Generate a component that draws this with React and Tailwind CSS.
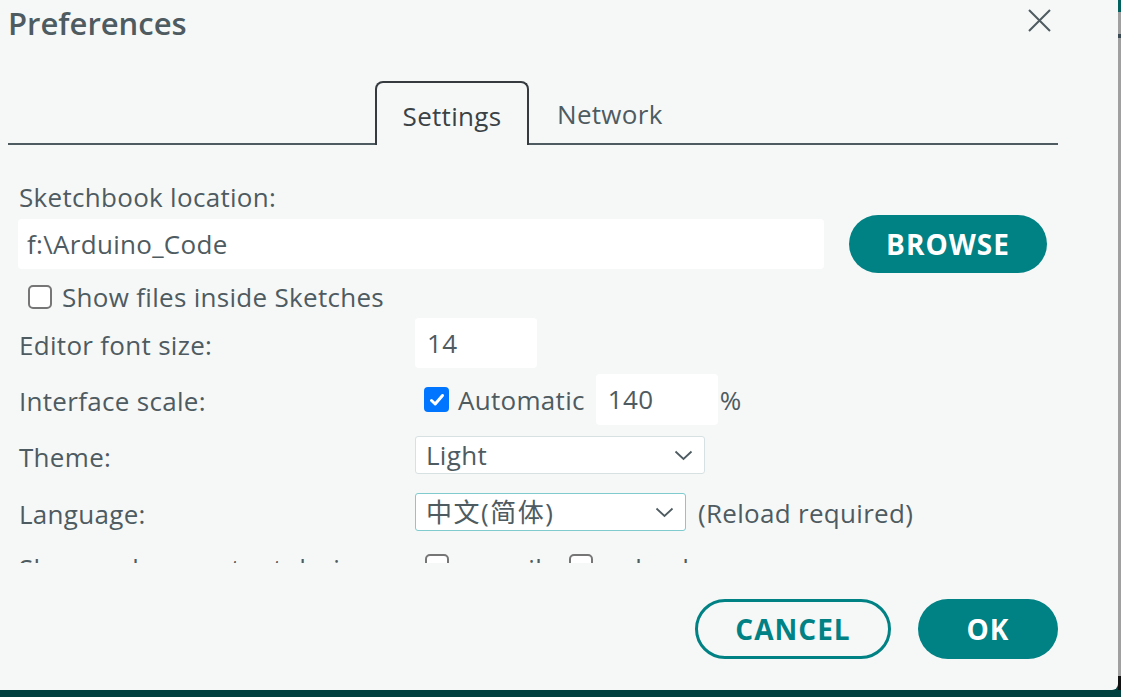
import React from 'react';

const font = { fontFamily: '"Open Sans", "Noto Sans CJK SC", sans-serif' };

function Checkbox({ checked }) {
  if (checked) {
    return (
      <span className="flex h-[25px] w-[25px] items-center justify-center rounded-[4px] bg-[#0075ff]">
        <svg width="18" height="18" viewBox="0 0 18 18" fill="none">
          <path d="M3.5 9.5 L7.2 13 L14.5 4.5" stroke="white" strokeWidth="3" strokeLinecap="round" strokeLinejoin="round" />
        </svg>
      </span>
    );
  }
  return <span className="block h-[24px] w-[24px] rounded-[5px] border-2 border-[#767676] bg-white" />;
}

function Chevron() {
  return (
    <svg width="19" height="11" viewBox="0 0 19 11" fill="none">
      <path d="M1.5 1.5 L9.5 9 L17.5 1.5" stroke="#4e5b61" strokeWidth="1.8" />
    </svg>
  );
}

export default function App() {
  return (
    <div className="flex h-[697px] w-[1121px] flex-col overflow-hidden bg-[#00403f] text-[#4e5b61]" style={font}>
      <div className="flex h-[690px]">
        {/* dialog */}
        <div className="flex h-full w-[1118px] flex-col rounded-br-[6px] bg-[#f6f8f8]">
          {/* header */}
          <div className="flex h-[81px] items-start justify-between">
            <h1 className="pl-[8px] pt-[2px] text-[31px] font-semibold leading-[42px] text-[#4e5b61]">Preferences</h1>
            <button className="mr-[67px] mt-[9px]">
              <svg width="23" height="23" viewBox="0 0 23 23" fill="none">
                <path d="M1 1 L22 22 M22 1 L1 22" stroke="#4e5b61" strokeWidth="2" />
              </svg>
            </button>
          </div>

          {/* tabs */}
          <div className="flex h-[64px] items-end pl-[8px] pr-[60px] text-[26px] tracking-[0.3px]">
            <div className="h-[2px] w-[367px] bg-[#4e5b61]" />
            <div className="flex h-[64px] w-[154px] items-center justify-center rounded-t-[8px] border-2 border-b-0 border-[#353b3e] pt-[4px] text-[#3a4246]">
              Settings
            </div>
            <div className="flex h-[64px] flex-1 flex-col">
              <div className="flex flex-1 items-center pl-[28px] pt-[4px] text-[#4e5b61]">Network</div>
              <div className="h-[2px] bg-[#4e5b61]" />
            </div>
          </div>

          {/* scrollable content */}
          <div className="h-[418px] overflow-hidden pl-[18px] pt-[36px] text-[26px] tracking-[0.3px]">
            <div className="flex h-[32px] items-center pl-[1px]">Sketchbook location:</div>
            <div className="mt-[2px] flex h-[58px] items-center">
              <div className="flex h-[50px] w-[806px] items-center rounded-[4px] bg-white pl-[9px]">f:\Arduino_Code</div>
              <button className="ml-[25px] flex h-[58px] w-[198px] items-center justify-center rounded-full bg-[#008184] text-[28px] font-bold tracking-[1px] text-white">
                BROWSE
              </button>
            </div>
            <div className="mt-[10px] flex h-[28px] items-center gap-[10px] pl-[10px]">
              <Checkbox />
              <span>Show files inside Sketches</span>
            </div>

            <div className="mt-[7px] flex h-[50px] items-center">
              <div className="w-[397px] pl-[1px] pt-[5px]">Editor font size:</div>
              <div className="flex h-[50px] w-[122px] items-center rounded-[4px] bg-white pl-[12px]">14</div>
            </div>

            <div className="mt-[6px] flex h-[51px] items-center">
              <div className="w-[397px] pl-[1px] pt-[4px]">Interface scale:</div>
              <div className="ml-[9px] flex items-center">
                <Checkbox checked />
                <span className="ml-[9px] pt-[2px]">Automatic</span>
                <div className="ml-[11px] flex h-[51px] w-[122px] items-center rounded-[4px] bg-white pl-[12px]">140</div>
                <span className="ml-[2px] pt-[2px]">%</span>
              </div>
            </div>

            <div className="mt-[11px] flex h-[38px] items-center">
              <div className="w-[397px] pl-[1px] pt-[5px]">Theme:</div>
              <div className="flex h-[38px] w-[290px] items-center justify-between rounded-[3px] border border-[#d7e1e1] bg-white pl-[10px] pr-[11px]">
                <span>Light</span>
                <Chevron />
              </div>
            </div>

            <div className="mt-[19px] flex h-[38px] items-center">
              <div className="w-[397px] pl-[1px] pt-[5px]">Language:</div>
              <div className="flex h-[38px] w-[271px] items-center justify-between rounded-[3px] border border-[#7fcbcd] bg-white pl-[10px] pr-[11px]">
                <span className="tracking-[1.5px]">中文(简体)</span>
                <Chevron />
              </div>
              <span className="ml-[12px] pt-[2px]">(Reload required)</span>
            </div>

            <div className="mt-[23px] flex h-[24px] items-start">
              <div className="w-[407px] pl-[1px] pt-[1px] leading-[26px]">Show verbose output during:</div>
              <Checkbox />
              <span className="ml-[10px] pt-[1px] leading-[26px]">compile</span>
              <span className="ml-[12px]"><Checkbox /></span>
              <span className="ml-[10px] pt-[1px] leading-[26px]">upload</span>
            </div>
          </div>

          {/* footer buttons */}
          <div className="mt-[36px] flex justify-end gap-[27px] pr-[60px]">
            <button className="flex h-[60px] w-[196px] items-center justify-center rounded-full border-[3px] border-[#008184] text-[28px] font-bold tracking-[1px] text-[#008184]">
              CANCEL
            </button>
            <button className="flex h-[60px] w-[140px] items-center justify-center rounded-full bg-[#008184] text-[28px] font-bold tracking-[1px] text-white">
              OK
            </button>
          </div>
        </div>

        {/* right edge strip */}
        <div className="flex w-[3px] flex-col">
          <div className="h-[12px] bg-[#00615f]" />
          <div className="h-[22px] bg-[#a0a0a0]" />
          <div className="h-[4px] bg-[#3b4a52]" />
          <div className="flex-1 bg-[#a0a0a0]" />
          <div className="h-[14px] bg-[#111]" />
        </div>
      </div>

      {/* status bar edge */}
      <div className="h-[7px] overflow-hidden pl-[452px] pt-[5px] text-[18px] leading-[18px] text-[#c8d0d0]">
        52996.53 Ry Modules 90460
      </div>
    </div>
  );
}
